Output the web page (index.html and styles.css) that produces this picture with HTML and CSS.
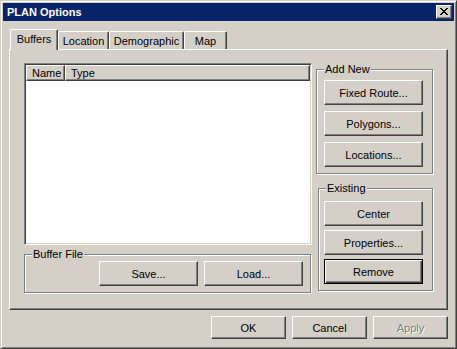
FILE: index.html
```html
<!DOCTYPE html>
<html>
<head>
    <title>PLAN Options</title>
    <link rel="stylesheet" href="styles.css">
</head>
<body>
    <div class="window">
        <div class="titlebar">
            <span class="title">PLAN Options</span>
            <button class="close">
                <svg width="8" height="7" viewBox="0 0 8 7" shape-rendering="crispEdges">
                    <path fill="#000" d="M0 0h2v1H0z M6 0h2v1H6z M1 1h2v1H1z M5 1h2v1H5z M2 2h4v1H2z M3 3h2v1H3z M2 4h4v1H2z M1 5h2v1H1z M5 5h2v1H5z M0 6h2v1H0z M6 6h2v1H6z"/>
                </svg>
            </button>
        </div>

        <div class="dialog">
            <div class="tabs">
                <div class="tab active tab-buffers">Buffers</div>
                <div class="tab tab-location">Location</div>
                <div class="tab tab-demo">Demographic</div>
                <div class="tab tab-map">Map</div>
            </div>

            <div class="panel">
                <div class="left-col">
                    <div class="listview">
                        <div class="list-header">
                            <div class="col col-name">Name</div>
                            <div class="col col-type">Type</div>
                        </div>
                    </div>
                    <div class="group group-file">
                        <span class="legend">Buffer File</span>
                        <button class="btn">Save...</button>
                        <button class="btn">Load...</button>
                    </div>
                </div>

                <div class="right-col">
                    <div class="group group-add">
                        <span class="legend">Add New</span>
                        <button class="btn">Fixed Route...</button>
                        <button class="btn">Polygons...</button>
                        <button class="btn">Locations...</button>
                    </div>
                    <div class="group group-existing">
                        <span class="legend">Existing</span>
                        <button class="btn">Center</button>
                        <button class="btn">Properties...</button>
                        <button class="btn default">Remove</button>
                    </div>
                </div>
            </div>

            <div class="actions">
                <button class="btn small">OK</button>
                <button class="btn small">Cancel</button>
                <button class="btn small disabled">Apply</button>
            </div>
        </div>
    </div>
</body>
</html>
```

FILE: styles.css
```css
body {
    margin: 0;
    padding: 0;
    background-color: #d4d0c8;
    font-family: "Liberation Sans", Arial, sans-serif;
    font-size: 11px;
}

.window {
    width: 457px;
    height: 349px;
    box-sizing: border-box;
    background-color: #d4d0c8;
    border: 1px solid;
    border-color: #d4d0c8 #404040 #404040 #d4d0c8;
    box-shadow: inset 1px 1px #fff, inset -1px -1px #808080;
    padding: 2px;
}

.titlebar {
    height: 18px;
    display: flex;
    align-items: center;
    justify-content: space-between;
    padding: 0 2px;
    background-color: #0a246a;
}

.title {
    color: #fff;
    font-weight: bold;
    padding-left: 2px;
}

.close {
    width: 16px;
    height: 14px;
    box-sizing: border-box;
    padding: 0;
    display: flex;
    align-items: center;
    justify-content: center;
    background-color: #d4d0c8;
    border: 1px solid;
    border-color: #fff #404040 #404040 #fff;
    box-shadow: inset -1px -1px #808080;
}

.close svg {
    display: block;
    margin-top: -1px;
}

.dialog {
    padding: 0 6px;
}

/* tabs */
.tabs {
    margin-top: 8px;
    height: 20px;
    display: flex;
    align-items: flex-end;
    padding-left: 1px;
}

.tab {
    box-sizing: border-box;
    height: 18px;
    display: flex;
    align-items: center;
    justify-content: center;
    border: 1px solid;
    border-bottom: none;
    border-color: #fff #404040 #fff #fff;
    border-radius: 2px 2px 0 0;
    box-shadow: inset -1px 0 #808080;
    background-color: #d4d0c8;
}

.tab.active {
    height: 21px;
    margin-bottom: -1px;
    padding-bottom: 3px;
    position: relative;
    z-index: 1;
}

.tab-buffers { width: 48px; }
.tab-location { width: 51px; }
.tab-demo { width: 75px; }
.tab-map { width: 43px; }

.panel {
    height: 261px;
    box-sizing: border-box;
    display: flex;
    gap: 4px;
    padding: 13px 0 0 14px;
    border: 1px solid;
    border-color: #fff #404040 #404040 #fff;
    box-shadow: inset -1px -1px #808080;
}

.left-col {
    width: 288px;
    display: flex;
    flex-direction: column;
}

.right-col {
    width: 118px;
    margin-top: 6px;
    display: flex;
    flex-direction: column;
}

/* list view */
.listview {
    height: 182px;
    box-sizing: border-box;
    background-color: #fff;
    border: 1px solid;
    border-color: #808080 #fff #fff #808080;
    box-shadow: inset 1px 1px #404040, inset -1px -1px #d4d0c8;
    padding: 1px;
}

.list-header {
    display: flex;
    height: 16px;
}

.col {
    box-sizing: border-box;
    height: 16px;
    line-height: 14px;
    padding-left: 5px;
    background-color: #d4d0c8;
    border: 1px solid;
    border-color: #fff #404040 #404040 #fff;
    box-shadow: inset -1px -1px #808080;
}

.col-name {
    width: 39px;
}

.col-type {
    flex: 1;
}

/* group boxes */
.group {
    position: relative;
    box-sizing: border-box;
    border: 1px solid #808080;
    box-shadow: 1px 1px #fff, inset 1px 1px #fff;
}

.legend {
    position: absolute;
    top: -7px;
    left: 7px;
    padding: 0 1px;
    line-height: 13px;
    background-color: #d4d0c8;
}

.group-file {
    margin-top: 9px;
    width: 287px;
    height: 39px;
    display: flex;
    justify-content: flex-end;
    gap: 6px;
    padding: 6px 7px 0 0;
}

.group-add {
    width: 117px;
    height: 105px;
    display: flex;
    flex-direction: column;
    gap: 6px;
    padding: 10px 0 0 7px;
}

.group-existing {
    margin-top: 14px;
    margin-left: 2px;
    width: 115px;
    height: 103px;
    display: flex;
    flex-direction: column;
    gap: 4px;
    padding: 12px 0 0 5px;
}

/* buttons */
.btn {
    width: 99px;
    height: 25px;
    box-sizing: border-box;
    padding: 0;
    font-family: inherit;
    font-size: 11px;
    color: #000;
    background-color: #d4d0c8;
    border: 1px solid;
    border-color: #fff #404040 #404040 #fff;
    box-shadow: inset -1px -1px #808080;
}

.btn.default {
    border-color: #000;
    box-shadow: inset 1px 1px #fff, inset -1px -1px #404040, inset -2px -2px #808080;
}

.actions {
    margin-top: 6px;
    display: flex;
    justify-content: flex-end;
    gap: 6px;
}

.btn.small {
    width: 75px;
    height: 23px;
}

.btn.disabled {
    color: #808080;
    text-shadow: 1px 1px #fff;
}
```
